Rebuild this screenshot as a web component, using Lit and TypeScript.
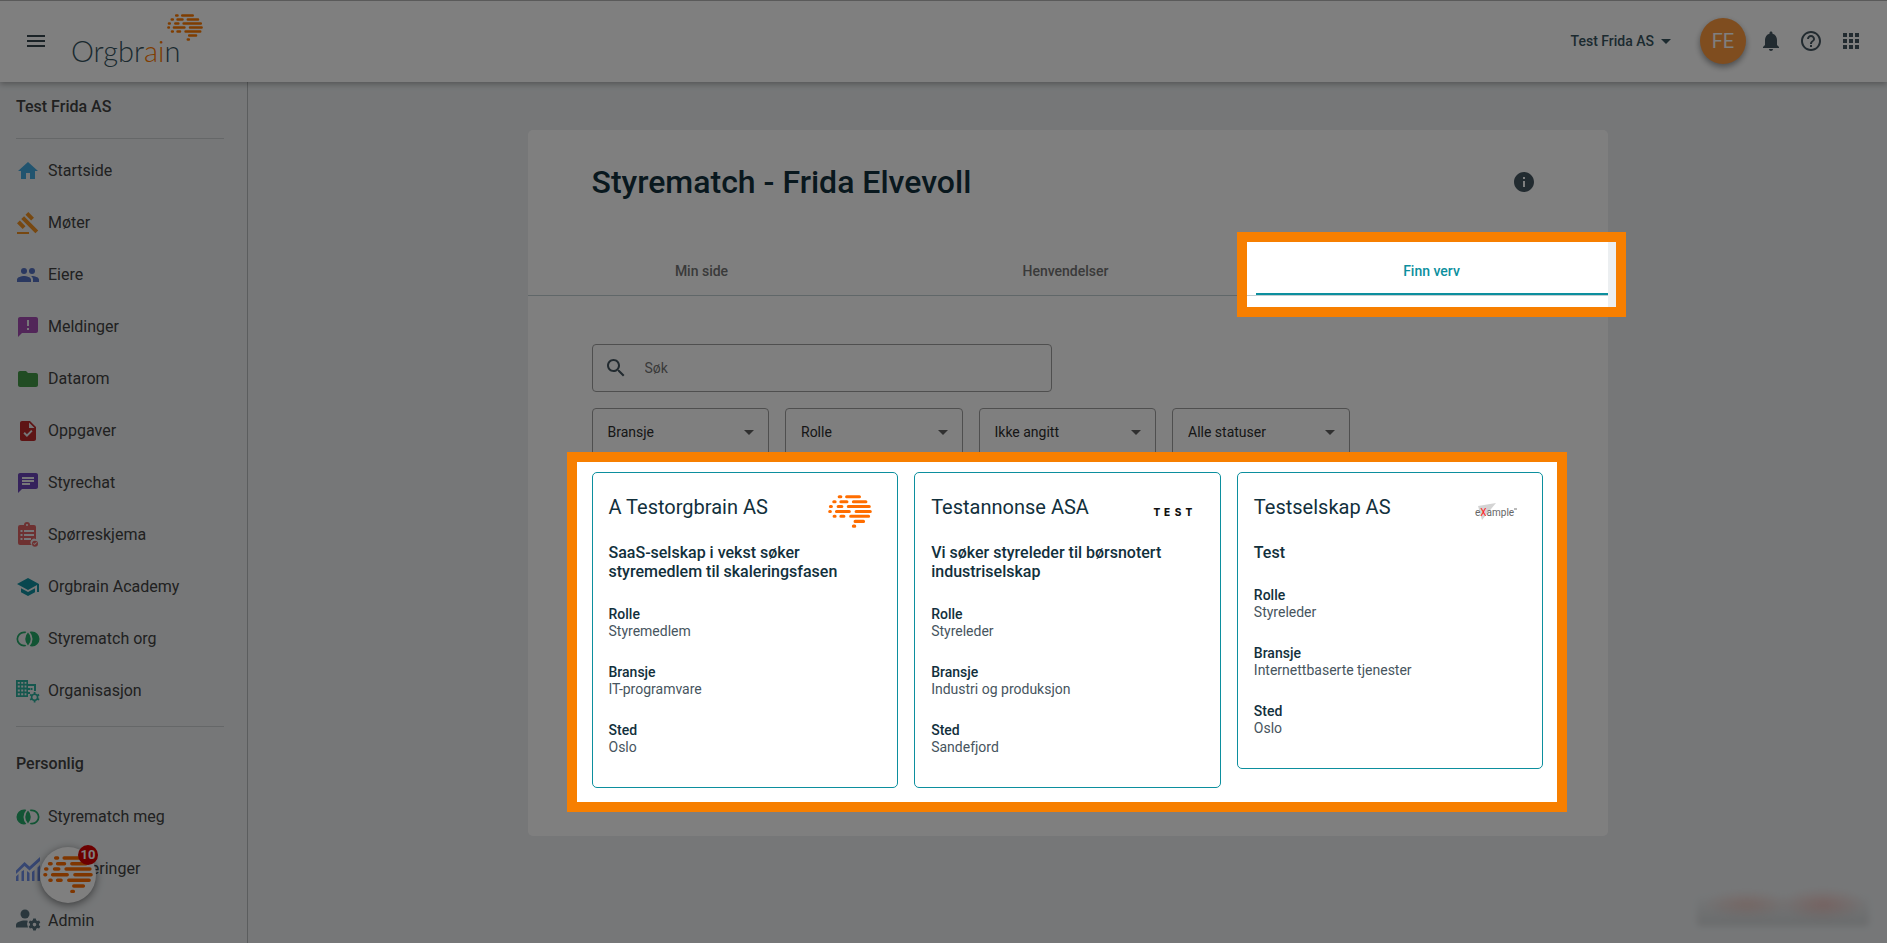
import { LitElement, html, css, svg, nothing } from "lit";
import { customElement, property, state } from "lit/decorators.js";
import { styleMap } from "lit/directives/style-map.js";
import { classMap } from "lit/directives/class-map.js";

const ICONS: Record<string, unknown> = {
  menu: svg`<path d="M3 18h18v-2H3v2zm0-5h18v-2H3v2zm0-7v2h18V6H3z"/>`,
  home: svg`<path d="M10 20v-6h4v6h5v-8h3L12 3 2 12h3v8z"/>`,
  gavel: svg`<path d="M1 21h12v2H1zM5.245 8.07l2.83-2.827 14.14 14.142-2.828 2.828zM12.317 1l5.657 5.656-2.83 2.83-5.654-5.66zM3.825 9.485l5.657 5.657-2.828 2.828-5.657-5.657z"/>`,
  people: svg`<circle cx="8" cy="8" r="3"/><circle cx="16" cy="8" r="3"/><path d="M8 13c-2.33 0-7 1.17-7 3.5V19h14v-2.5c0-2.33-4.67-3.5-7-3.5zm8 0c-.29 0-.62.02-.97.05 1.16.84 1.97 1.97 1.97 3.45V19h6v-2.5c0-2.33-4.67-3.5-7-3.5z"/>`,
  alert: svg`<path d="M20 2H4c-1.1 0-1.99.9-1.99 2L2 22l4-4h14c1.1 0 2-.9 2-2V4c0-1.1-.9-2-2-2zm-7 9h-2V5h2v6zm0 4h-2v-2h2v2z"/>`,
  folder: svg`<path d="M10 4H4c-1.1 0-1.99.9-1.99 2L2 18c0 1.1.9 2 2 2h16c1.1 0 2-.9 2-2V8c0-1.1-.9-2-2-2h-8l-2-2z"/>`,
  task: svg`<path d="M14 2H6c-1.1 0-1.99.9-1.99 2L4 20c0 1.1.89 2 1.99 2H18c1.1 0 2-.9 2-2V8l-6-6zm-3.06 16L7.4 14.46l1.41-1.41 2.12 2.12 4.24-4.24 1.41 1.41L10.94 18zM13 9V3.5L18.5 9H13z"/>`,
  chat: svg`<path d="M20 2H4c-1.1 0-1.99.9-1.99 2L2 22l4-4h14c1.1 0 2-.9 2-2V4c0-1.1-.9-2-2-2zM6 9h12v2H6V9zm8 5H6v-2h8v2zm4-6H6V6h12v2z"/>`,
  survey: svg`<path fill-rule="evenodd" d="M4 2h4a3 3 0 0 1 6 0h4a2 2 0 0 1 2 2v12.2a3.6 3.6 0 0 0-4.2 5.8H4a2 2 0 0 1-2-2V4a2 2 0 0 1 2-2zm7-1a1 1 0 1 0 0 2 1 1 0 0 0 0-2zM4.500 7v2h2V7zm3.500 0v2h10V7zM4.500 11v2h2v-2zm3.500 0v2h10v-2zM4.500 15v2h2v-2zm3.500 0v2h7v-2z"/><path fill-rule="evenodd" d="M19 17.800a3 3 0 1 0 0 6 3 3 0 0 0 0-6zm-.4 4.300-1.500-1.400.6-.7.9.8 1.700-1.800.7.700z"/>`,
  school: svg`<path d="M5 13.180v4L12 21l7-3.820v-4L12 17l-7-3.820zM12 3L1 9l11 6 9-4.910V17h2V9L12 3z"/>`,
  match: svg`<path d="M16 4.500a7.500 7.500 0 0 1 0 15c-.9 0-1.600-.1-2.300-.4A10.500 10.500 0 0 0 16.500 12a10.500 10.500 0 0 0-2.800-7.100c.7-.3 1.400-.4 2.300-.4z"/><path d="M12 5.600a8.800 8.800 0 0 1 0 12.800 8.800 8.800 0 0 1 0-12.800z"/><path d="M8 4.500c.9 0 1.700.1 2.400.4L9.200 6.300A5.800 5.800 0 0 0 8 6.200a5.800 5.800 0 0 0 0 11.600c.4 0 .8 0 1.200-.1l1.200 1.400c-.7.3-1.500.4-2.400.4a7.500 7.500 0 0 1 0-15z"/>`,
  org: svg`<path fill-rule="evenodd" d="M0 1h12v4h8v7h-2V7h-6v2h2v2h-2v2h2v2h-2v3H0zM1.800 3v1.800h2V3zm3.400 0v1.800h2V3zm3.400 0v1.800h1.800V3zM1.800 6.600v2h2v-2zm3.400 0v2h2v-2zm3.400 0v2h1.800v-2zM1.800 10.400v2h2v-2zm3.400 0v2h2v-2zm3.400 0v2h1.800v-2zM1.800 14.200v2h2v-2zm3.400 0v2h2v-2zm3.400 0v2h1.800v-2zM14.500 9h2v2h-2z"/><circle cx="18.600" cy="18.200" r="3" fill="none" stroke="currentColor" stroke-width="1.600"/><path d="M18.600 13v2.400M18.600 21v2.400M14.100 15.600l2.100 1.200M21 19.600l2.100 1.200M14.100 20.800l2.100-1.200M21 16.800l2.100-1.200" fill="none" stroke="currentColor" stroke-width="1.800"/>`,
  chart: svg`<path d="M0 13.500 8.500 5l5 4.500L24 0v4L13.500 13.500l-5-4.500L0 17z"/><path d="M0 19.500 2.500 17v7H0zM5.500 14.500 8 13v11H5.500zM11 14l2.500 2v8H11zM16 15l2.500-2v11H16zM21.500 10.500 24 8v16h-2.500z"/>`,
  admin: svg`<circle cx="9" cy="5" r="4.500"/><path d="M0 18.500V16c0-3 5-4.500 9-4.500 1 0 1.900.1 2.800.3a7 7 0 0 0 .2 6.700z"/><path fill-rule="evenodd" d="M17.200 9.600h2.600l.4 1.700 1.200.7 1.700-.6 1.200 2.200-1.300 1.200v1.400l1.300 1.200-1.200 2.200-1.700-.6-1.200.7-.4 1.700h-2.600l-.4-1.700-1.200-.7-1.700.6-1.200-2.200 1.300-1.200v-1.400l-1.300-1.200 1.200-2.200 1.700.6 1.200-.7zm1.300 4.200a1.800 1.800 0 1 0 0 3.600 1.800 1.800 0 0 0 0-3.600z"/>`,
  bell: svg`<path d="M12 22c1.100 0 2-.9 2-2h-4c0 1.100.89 2 2 2zm6-6v-5c0-3.070-1.640-5.640-4.500-6.320V4c0-.83-.67-1.500-1.500-1.500s-1.500.67-1.500 1.500v.68C7.630 5.360 6 7.920 6 11v5l-2 2v1h16v-1l-2-2z"/>`,
  help: svg`<path d="M11 18h2v-2h-2v2zm1-16C6.480 2 2 6.480 2 12s4.480 10 10 10 10-4.480 10-10S17.520 2 12 2zm0 18c-4.410 0-8-3.590-8-8s3.590-8 8-8 8 3.590 8 8-3.590 8-8 8zm0-14c-2.210 0-4 1.790-4 4h2c0-1.100.9-2 2-2s2 .9 2 2c0 2-3 1.750-3 5h2c0-2.250 3-2.500 3-5 0-2.210-1.790-4-4-4z"/>`,
  apps: svg`<path d="M4 8h4V4H4v4zm6 12h4v-4h-4v4zm-6 0h4v-4H4v4zm0-6h4v-4H4v4zm6 0h4v-4h-4v4zm6-10v4h4V4h-4zm-6 4h4V4h-4v4zm6 6h4v-4h-4v4zm0 6h4v-4h-4v4z"/>`,
  info: svg`<path d="M12 2C6.480 2 2 6.480 2 12s4.480 10 10 10 10-4.480 10-10S17.520 2 12 2zm1 15h-2v-6h2v6zm0-8h-2V7h2v2z"/>`,
  search: svg`<path d="M15.500 14h-.79l-.28-.27C15.410 12.590 16 11.110 16 9.500 16 5.910 13.090 3 9.500 3S3 5.910 3 9.500 5.910 16 9.500 16c1.610 0 3.090-.59 4.230-1.570l.27.28v.79l5 4.990L20.490 19l-4.990-5zm-6 0C7.010 14 5 11.990 5 9.500S7.010 5 9.500 5 14 7.010 14 9.500 11.990 14 9.500 14z"/>`,
  caret: svg`<path d="M7 10l5 5 5-5z"/>`,
};

@customElement("ui-icon")
export class UiIcon extends LitElement {
  @property() name = "";
  static styles = css`
    :host { display: block; width: 24px; height: 24px; flex: none; }
    svg { display: block; width: 100%; height: 100%; fill: currentColor; overflow: visible; }
  `;
  render() {
    return html`<svg viewBox="0 0 24 24" aria-hidden="true">${ICONS[this.name] ?? nothing}</svg>`;
  }
}

@customElement("brain-mark")
export class BrainMark extends LitElement {
  static styles = css`
    :host { display: block; color: #ff6d00; }
    svg { display: block; width: 100%; stroke: currentColor; stroke-width: 9; stroke-linecap: round; fill: none; }
  `;
  render() {
    return html`<svg viewBox="0 0 130 98" aria-hidden="true">
      <path d="M33 5h5M55 5h38M17 20h4M38 20h18M75 20h37M7 34h3M30 34h11M60 34h62M5 49h2M25 49h38M83 49h42M18 63h3M38 63h9M67 63h53M80 78h25M75 92h4"/>
    </svg>`;
  }
}

interface NavItem { icon: string; label: string; tone: string; flip?: boolean; }

const ORG_NAV: NavItem[] = [
  { icon: "home", label: "Startside", tone: "sky" },
  { icon: "gavel", label: "Møter", tone: "amber" },
  { icon: "people", label: "Eiere", tone: "indigo" },
  { icon: "alert", label: "Meldinger", tone: "magenta" },
  { icon: "folder", label: "Datarom", tone: "green" },
  { icon: "task", label: "Oppgaver", tone: "red" },
  { icon: "chat", label: "Styrechat", tone: "violet" },
  { icon: "survey", label: "Spørreskjema", tone: "coral" },
  { icon: "school", label: "Orgbrain Academy", tone: "teal" },
  { icon: "match", label: "Styrematch org", tone: "emerald" },
  { icon: "org", label: "Organisasjon", tone: "mint" },
];

const PERSONAL_NAV: NavItem[] = [
  { icon: "match", label: "Styrematch meg", tone: "emerald", flip: true },
  { icon: "chart", label: "Investeringer", tone: "blue" },
  { icon: "admin", label: "Admin", tone: "slate" },
];

interface Listing { company: string; logo: "brain" | "test" | "example"; headline: string; role: string; industry: string; place: string; }

const LISTINGS: Listing[] = [
  { company: "A Testorgbrain AS", logo: "brain", headline: "SaaS-selskap i vekst søker styremedlem til skaleringsfasen", role: "Styremedlem", industry: "IT-programvare", place: "Oslo" },
  { company: "Testannonse ASA", logo: "test", headline: "Vi søker styreleder til børsnotert industriselskap", role: "Styreleder", industry: "Industri og produksjon", place: "Sandefjord" },
  { company: "Testselskap AS", logo: "example", headline: "Test", role: "Styreleder", industry: "Internettbaserte tjenester", place: "Oslo" },
];

const FILTERS = [
  { label: "Filtrer på bransje", value: "Bransje" },
  { label: "Filtrer på rolle", value: "Rolle" },
  { label: "Filtrer på godtgjørelse", value: "Ikke angitt" },
  { label: "Filtrer på status", value: "Alle statuser" },
];

@customElement("listing-card")
export class ListingCard extends LitElement {
  @property({ attribute: false }) listing!: Listing;
  static styles = css`
    :host { display: block; box-sizing: border-box; border: 1px solid #0c8f9e; border-radius: 5px; padding: 15px 16px 31px; color: #12303c; background: #fff; }
    .head { display: flex; justify-content: space-between; align-items: center; height: 48px; padding-right: 7px; }
    h2 { margin: 0 0 10px; font-size: 20px; line-height: 24px; font-weight: 400; }
    .logo { display: flex; justify-content: center; width: 48px; }
    brain-mark { width: 44px; }
    svg { display: block; width: 48px; height: 24px; overflow: visible; }
    h3 { margin: 7px 0 25px; font-size: 16px; line-height: 19px; font-weight: 500; }
    dl { margin: 0; display: grid; gap: 24px; font-size: 14px; line-height: 17px; }
    dt { font-weight: 500; }
    dd { margin: 0; color: #47555e; }
  `;
  private logo() {
    switch (this.listing.logo) {
      case "brain": return html`<brain-mark></brain-mark>`;
      case "test": return html`<svg viewBox="0 0 48 24" role="img" aria-label="Test">
        <g font-family="Inter, sans-serif" font-weight="800" font-size="10" fill="#111" text-anchor="middle">
          <text x="8" y="16">T</text><text x="18" y="16">E</text><text x="29" y="16">S</text><text x="40" y="16">T</text>
        </g></svg>`;
      case "example": return html`<svg viewBox="0 0 48 24" role="img" aria-label="Example">
        <path d="M7 6 25 3 11 20z" fill="#d4d4d4"/>
        <text x="4" y="16" font-family="Roboto, sans-serif" font-size="10" fill="#666">e<tspan fill="#f22">X</tspan>ample</text>
        <path d="M43 9h3" stroke="#777" stroke-width="1"/></svg>`;
    }
  }
  render() {
    const l = this.listing;
    return html`
      <div class="head"><h2>${l.company}</h2><div class="logo">${this.logo()}</div></div>
      <h3>${l.headline}</h3>
      <dl>
        <div><dt>Rolle</dt><dd>${l.role}</dd></div>
        <div><dt>Bransje</dt><dd>${l.industry}</dd></div>
        <div><dt>Sted</dt><dd>${l.place}</dd></div>
      </dl>`;
  }
}

interface Spot { left: number; top: number; right: number; bottom: number; }
interface SpotTarget { selector: string; pad: [number, number, number, number]; }

/* Padding around each highlighted target: top, right, bottom, left. */
const SPOT_TARGETS: SpotTarget[] = [
  { selector: ".tab.active", pad: [5, 8, 12, 9] },
  { selector: ".cards", pad: [10, 13, 14, 15] },
];

@customElement("app-root")
export class AppRoot extends LitElement {
  @state() private spots: Spot[] = [];
  private observer?: ResizeObserver;

  static styles = css`
    :host { display: block; position: relative; height: 100vh; overflow: hidden; font-family: Roboto, sans-serif; color: #37474f; background: #eceff1; }
    * { box-sizing: border-box; }
    button { font: inherit; color: inherit; background: none; border: 0; padding: 0; margin: 0; cursor: pointer; }
    a { color: inherit; text-decoration: none; }
    .shell { display: flex; flex-direction: column; height: 100%; }

    header { position: relative; z-index: 1; flex: none; display: flex; align-items: center; justify-content: space-between; height: 82px; padding: 0 24px 2px; background: #fff; border-top: 1px solid #b4b4b4; box-shadow: 0 2px 6px rgba(0, 0, 0, 0.3); }
    .brand { display: flex; align-items: center; gap: 24px; }
    .logo { display: block; }
    .logo svg { display: block; width: 136px; height: 56px; overflow: visible; }
    .tools { display: flex; align-items: center; gap: 16px; color: #455660; }
    .company { display: flex; align-items: center; font-size: 14px; line-height: 24px; font-weight: 500; color: #38545f; margin-right: 6px; }
    .avatar { width: 46px; height: 46px; margin-right: -3px; border-radius: 50%; background: #ff9a3f; color: #fff; font-size: 20px; display: grid; place-items: center; box-shadow: 0 3px 6px rgba(0, 0, 0, 0.4); }

    .body { flex: 1; display: flex; min-height: 0; }
    nav { flex: none; width: 248px; border-right: 1px solid #b6babc; padding: 13px 23px 0 16px; overflow: hidden; color: #424242; }
    nav h2 { margin: 0; font-size: 16px; line-height: 24px; font-weight: 500; }
    nav hr { margin: 0; border: 0; border-top: 1px solid #cbced0; }
    nav .first { margin: 19px 0 6px; }
    nav .second { margin: 9px 0 25px; }
    nav ul { list-style: none; margin: 0; padding: 0; }
    nav .personal { margin-top: 15px; }
    nav a { display: flex; align-items: center; gap: 8px; height: 52px; font-size: 16px; line-height: 24px; }
    .flip { transform: scaleX(-1); }
    .sky { color: #42a8de; } .amber { color: #ee9022; } .indigo { color: #5470c0; } .magenta { color: #a54cb2; }
    .green { color: #439947; } .red { color: #bd2a2a; } .violet { color: #6a44b8; } .coral { color: #dc6262; }
    .teal { color: #108e9e; } .emerald { color: #24a868; } .mint { color: #2cae9c; } .blue { color: #6c8ce4; } .slate { color: #546e7a; }

    main { flex: 1; min-width: 0; padding: 48px 24px; }
    .panel { max-width: 1080px; margin: 0 auto; background: #fff; border-radius: 5px; padding-bottom: 48px; }
    .title { display: flex; align-items: center; justify-content: space-between; padding: 32px 72px 0 64px; }
    h1 { margin: 0; font-size: 32px; line-height: 40px; font-weight: 500; color: #12303c; }
    .title button { color: #455660; }
    .tabs { display: grid; grid-template-columns: repeat(3, 1fr); gap: 12px; margin-top: 45px; border-bottom: 1px solid #c0ced2; }
    .tab { height: 48px; padding: 2px 4px 0 0; font-size: 14px; line-height: 24px; font-weight: 500; color: #757575; border-bottom: 2px solid transparent; }
    .tab.active { padding-right: 0; color: #0c8f9e; border-bottom-color: #0c8f9e; }
    .content { padding: 48px 64px 0; display: grid; gap: 16px; }
    .search { display: flex; align-items: center; gap: 17px; max-width: 460px; height: 48px; border: 1px solid #9e9e9e; border-radius: 4px; padding: 0 11px; color: #455660; }
    input { flex: 1; min-width: 0; border: 0; outline: 0; background: none; padding: 0; font: 400 14px/24px Roboto, sans-serif; color: #424242; }
    input::placeholder { color: #757575; opacity: 1; }
    .filters { display: grid; grid-template-columns: repeat(4, 1fr); gap: 16px; max-width: 758px; }
    .filter { display: grid; align-items: center; color: #616161; }
    .filter > * { grid-area: 1 / 1; }
    .filter ui-icon { justify-self: end; margin-right: 8px; pointer-events: none; }
    select { appearance: none; width: 100%; height: 48px; border: 1px solid #9e9e9e; border-radius: 4px; padding: 0 36px 0 15px; background: none; font: 400 14px/24px Roboto, sans-serif; color: #2e2e2e; }
    .cards { display: grid; grid-template-columns: repeat(3, 1fr); gap: 16px; align-items: start; }

    .support { position: absolute; left: 40px; bottom: 40px; width: 56px; height: 56px; border-radius: 50%; background: #fff; display: grid; place-items: center; box-shadow: 0 2px 8px rgba(0, 0, 0, 0.5); }
    .support brain-mark { width: 50px; }
    .count { position: absolute; top: -2px; right: -2px; width: 20px; height: 20px; border-radius: 50%; background: #d80000; color: #fff; font-size: 13px; line-height: 20px; font-weight: 700; text-align: center; }
    .notice { position: absolute; right: 18px; bottom: 17px; width: 172px; height: 44px; border-radius: 4px; background: linear-gradient(transparent 30%, rgba(0, 0, 0, 0.1)); filter: blur(3px); }
    .notice::before { content: ""; position: absolute; inset: 0; background: radial-gradient(44px 14px at 50px 22px, rgba(255, 110, 80, 0.22), transparent), radial-gradient(44px 16px at 126px 22px, rgba(255, 100, 80, 0.26), transparent); }

    .dim { position: absolute; inset: 0; z-index: 2; background: rgba(0, 0, 0, 0.5); pointer-events: none; }
    .frame { position: absolute; z-index: 3; border: 10px solid #f77f00; pointer-events: none; }
  `;

  firstUpdated() {
    this.observer = new ResizeObserver(() => this.measure());
    this.observer.observe(this);
    this.renderRoot.querySelectorAll(".tab.active, .cards").forEach((el) => this.observer!.observe(el));
    this.updateComplete.then(() => this.measure());
  }

  disconnectedCallback() {
    super.disconnectedCallback();
    this.observer?.disconnect();
  }

  private measure() {
    const host = this.getBoundingClientRect();
    this.spots = SPOT_TARGETS.map(({ selector, pad }) => {
      const r = this.renderRoot.querySelector(selector)!.getBoundingClientRect();
      return {
        left: Math.round(r.left - host.left) - pad[3],
        top: Math.round(r.top - host.top) - pad[0],
        right: Math.round(r.right - host.left) + pad[1],
        bottom: Math.round(r.bottom - host.top) + pad[2],
      };
    });
  }

  private get cutout() {
    const holes = this.spots.map((s) =>
      `${s.left}px ${s.top}px, ${s.left}px ${s.bottom}px, ${s.right}px ${s.bottom}px, ${s.right}px ${s.top}px, ${s.left}px ${s.top}px, 0 0`);
    return `polygon(evenodd, ${["0 0, 100% 0, 100% 100%, 0 100%, 0 0", ...holes].join(", ")})`;
  }

  private nav(items: NavItem[]) {
    return items.map((i) => html`<li><a href="#"><ui-icon name=${i.icon} class=${classMap({ [i.tone]: true, flip: !!i.flip })}></ui-icon>${i.label}</a></li>`);
  }

  render() {
    return html`
      <div class="shell">
        <header>
          <div class="brand">
            <button aria-label="Meny"><ui-icon name="menu"></ui-icon></button>
            <a class="logo" href="#" aria-label="Orgbrain">
              <svg viewBox="0 0 136 56">
                <text x="-1" y="49" font-family="Lato, sans-serif" font-weight="300" font-size="29" fill="#37545f">Orgbr<tspan fill="#ff7a00">ai</tspan>n</text>
                <path transform="translate(95 1) scale(.277)" stroke="#ff7a00" stroke-width="9" stroke-linecap="round" fill="none"
                  d="M33 5h5M55 5h38M17 20h4M38 20h18M75 20h37M7 34h3M30 34h11M60 34h62M5 49h2M25 49h38M83 49h42M18 63h3M38 63h9M67 63h53M80 78h25M75 92h4"/>
              </svg>
            </a>
          </div>
          <div class="tools">
            <button class="company">Test Frida AS<ui-icon name="caret"></ui-icon></button>
            <button class="avatar" aria-label="Brukerprofil">FE</button>
            <button aria-label="Varsler"><ui-icon name="bell"></ui-icon></button>
            <button aria-label="Hjelp"><ui-icon name="help"></ui-icon></button>
            <button aria-label="Apper"><ui-icon name="apps"></ui-icon></button>
          </div>
        </header>
        <div class="body">
          <nav>
            <h2>Test Frida AS</h2>
            <hr class="first" />
            <ul>${this.nav(ORG_NAV)}</ul>
            <hr class="second" />
            <h2>Personlig</h2>
            <ul class="personal">${this.nav(PERSONAL_NAV)}</ul>
          </nav>
          <main>
            <section class="panel">
              <div class="title">
                <h1>Styrematch - Frida Elvevoll</h1>
                <button aria-label="Informasjon"><ui-icon name="info"></ui-icon></button>
              </div>
              <div class="tabs" role="tablist">
                <button class="tab" role="tab" aria-selected="false">Min side</button>
                <button class="tab" role="tab" aria-selected="false">Henvendelser</button>
                <button class="tab active" role="tab" aria-selected="true">Finn verv</button>
              </div>
              <div class="content">
                <label class="search"><ui-icon name="search"></ui-icon><input type="search" placeholder="Søk" aria-label="Søk" /></label>
                <div class="filters">
                  ${FILTERS.map((f) => html`<div class="filter">
                    <select aria-label=${f.label}><option>${f.value}</option></select>
                    <ui-icon name="caret"></ui-icon>
                  </div>`)}
                </div>
                <div class="cards">${LISTINGS.map((l) => html`<listing-card .listing=${l}></listing-card>`)}</div>
              </div>
            </section>
          </main>
        </div>
      </div>
      <div class="notice"></div>
      <button class="support" aria-label="Åpne chat, 10 uleste"><brain-mark></brain-mark><span class="count">10</span></button>
      <div class="dim" style=${styleMap({ clipPath: this.cutout })}></div>
      ${this.spots.map((s) => html`<div class="frame" style=${styleMap({
        left: `${s.left - 10}px`, top: `${s.top - 10}px`,
        width: `${s.right - s.left + 20}px`, height: `${s.bottom - s.top + 20}px`,
      })}></div>`)}
    `;
  }
}
